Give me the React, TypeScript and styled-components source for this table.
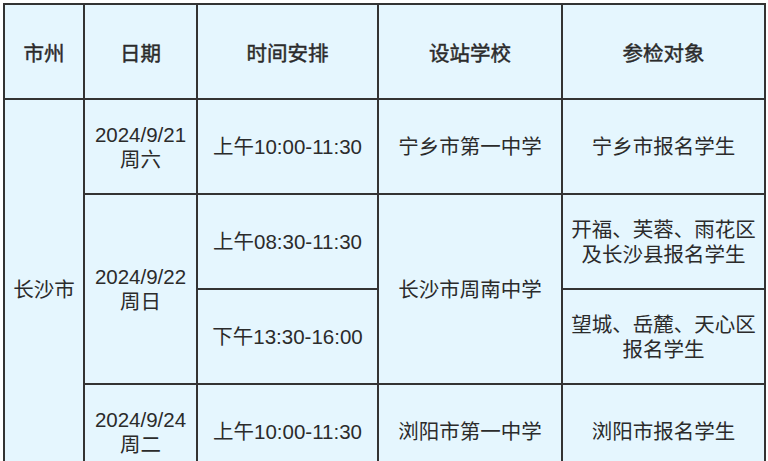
import React from 'react';
import styled, { createGlobalStyle } from 'styled-components';

const GlobalStyle = createGlobalStyle`
  body {
    margin: 0;
    background: #ffffff;
    overflow: hidden;
  }
`;

const Page = styled.div`
  padding: 3px 0 0 3px;
`;

const Table = styled.table`
  border-collapse: collapse;
  table-layout: fixed;
  width: 761px;
  font-family: "Liberation Sans", "Noto Sans CJK SC", sans-serif;
  font-size: 20.5px;
  line-height: 25px;
  color: #2b2b2b;
`;

const Row = styled.tr`
  height: 95px;
`;

const HeadCell = styled.th`
  border: 2px solid #333;
  background: #e5f6fe;
  font-weight: 400;
  -webkit-text-stroke: 0.45px #2b2b2b;
  text-align: center;
  vertical-align: middle;
  padding: 4px 0 0;
`;

const Cell = styled.td`
  border: 2px solid #333;
  background: #e5f6fe;
  text-align: center;
  vertical-align: middle;
  padding: 0 4px;
`;

const columns = [80, 113, 181, 184, 203];
const headers = ['市州', '日期', '时间安排', '设站学校', '参检对象'];

const App: React.FC = () => {
  return (
    <Page>
      <GlobalStyle />
      <Table>
        <colgroup>
          {columns.map((w, i) => (
            <col key={i} style={{ width: w }} />
          ))}
        </colgroup>
        <thead>
          <Row>
            {headers.map(h => (
              <HeadCell key={h}>{h}</HeadCell>
            ))}
          </Row>
        </thead>
        <tbody>
          <Row>
            <Cell rowSpan={4}>长沙市</Cell>
            <Cell>
              2024/9/21
              <br />
              周六
            </Cell>
            <Cell>上午10:00-11:30</Cell>
            <Cell>宁乡市第一中学</Cell>
            <Cell>宁乡市报名学生</Cell>
          </Row>
          <Row>
            <Cell rowSpan={2}>
              2024/9/22
              <br />
              周日
            </Cell>
            <Cell>上午08:30-11:30</Cell>
            <Cell rowSpan={2}>长沙市周南中学</Cell>
            <Cell>
              开福、芙蓉、雨花区
              <br />
              及长沙县报名学生
            </Cell>
          </Row>
          <Row>
            <Cell>下午13:30-16:00</Cell>
            <Cell>
              望城、岳麓、天心区
              <br />
              报名学生
            </Cell>
          </Row>
          <Row>
            <Cell>
              2024/9/24
              <br />
              周二
            </Cell>
            <Cell>上午10:00-11:30</Cell>
            <Cell>浏阳市第一中学</Cell>
            <Cell>浏阳市报名学生</Cell>
          </Row>
        </tbody>
      </Table>
    </Page>
  );
};

export default App;
